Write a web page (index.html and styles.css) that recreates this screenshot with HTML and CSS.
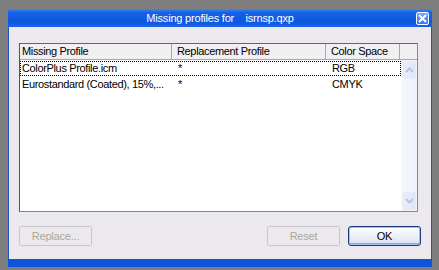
FILE: index.html
```html
<!DOCTYPE html>
<html lang="en">
<head>
    <meta charset="UTF-8">
    <title>Missing profiles</title>
    <link rel="stylesheet" href="styles.css">
</head>
<body>
    <div class="window">
        <div class="titlebar">
            <span class="title">Missing profiles for    isrnsp.qxp</span>
            <button class="close" aria-label="Close">
                <svg width="9" height="9" viewBox="0 0 9 9">
                    <path d="M1 1 L8 8 M8 1 L1 8" stroke="#fff" stroke-width="2"/>
                </svg>
            </button>
        </div>
        <div class="content">
            <div class="list">
                <div class="list-header">
                    <div class="col">Missing Profile</div>
                    <div class="col">Replacement Profile</div>
                    <div class="col">Color Space</div>
                    <div class="col"></div>
                </div>
                <div class="list-body">
                    <div class="rows">
                        <div class="row focused">
                            <div class="cell">ColorPlus Profile.icm</div>
                            <div class="cell">*</div>
                            <div class="cell">RGB</div>
                        </div>
                        <div class="row">
                            <div class="cell">Eurostandard (Coated), 15%,...</div>
                            <div class="cell">*</div>
                            <div class="cell">CMYK</div>
                        </div>
                    </div>
                    <div class="scrollbar">
                        <div class="scroll-btn">
                            <svg width="9" height="6" viewBox="0 0 9 6"><path d="M1 5 L4.5 1.5 L8 5" fill="none" stroke="#b8c6e2" stroke-width="2"/></svg>
                        </div>
                        <div class="scroll-track"></div>
                        <div class="scroll-btn">
                            <svg width="9" height="6" viewBox="0 0 9 6"><path d="M1 1 L4.5 4.5 L8 1" fill="none" stroke="#b8c6e2" stroke-width="2"/></svg>
                        </div>
                    </div>
                </div>
            </div>
            <div class="buttons">
                <button class="btn" disabled>Replace...</button>
                <span class="spacer"></span>
                <button class="btn" disabled>Reset</button>
                <button class="btn default">OK</button>
            </div>
        </div>
    </div>
</body>
</html>
```

FILE: styles.css
```css
body {
    margin: 0;
    background-color: #7f7f7f;
    font-family: "Liberation Sans", Arial, sans-serif;
    font-size: 11px;
    letter-spacing: -0.35px;
    color: #000;
}
.window {
    margin: 9px 0 0 8px;
    width: 424px;
    height: 258px;
    display: flex;
    flex-direction: column;
}
.titlebar {
    height: 18px;
    background: linear-gradient(#3d86f0 0%, #1660e6 20%, #0c58e0 70%, #1a63e8 100%);
    display: flex;
    align-items: center;
    justify-content: center;
    position: relative;
    border-radius: 2px 2px 0 0;
}
.title {
    color: #fff;
    white-space: pre;
    letter-spacing: -0.2px;
}
.close {
    position: absolute;
    right: 3px;
    top: 3px;
    width: 13px;
    height: 13px;
    padding: 0;
    border: 1px solid #fff;
    border-radius: 2px;
    background: linear-gradient(#7aa6f6, #3a72e8);
    display: flex;
    align-items: center;
    justify-content: center;
}
.content {
    flex: 1;
    background-color: #ebe9ed;
    border-left: 1px solid #1c55c8;
    border-right: 1px solid #1c55c8;
    border-bottom: 8px solid #0d56dc;
    padding: 16px 13px 0 10px;
    display: flex;
    flex-direction: column;
}
.list {
    width: 397px;
    height: 167px;
    background: #fff;
    border: 1px solid #828790;
    border-left-color: #555;
    border-top-color: #666;
    display: flex;
    flex-direction: column;
}
.list-header {
    display: grid;
    grid-template-columns: 152px 154px 74px 1fr;
    height: 15px;
    background: #f1eff2;
    border-bottom: 1px solid #a8a6a8;
}
.list-header .col {
    border-right: 1px solid #a8a6a8;
    padding-left: 5px;
    line-height: 15px;
    white-space: nowrap;
    overflow: hidden;
}
.list-header .col:first-child {
    padding-left: 2px;
}
.list-header .col:last-child {
    border-right: none;
}
.list-body {
    flex: 1;
    display: flex;
}
.rows {
    width: 381px;
}
.row {
    display: grid;
    grid-template-columns: 152px 154px 75px;
    height: 14px;
    line-height: 14px;
    border: 1px dotted transparent;
    margin-bottom: 0;
}
.row.focused {
    border-color: #000;
    height: 13px;
    line-height: 13px;
    margin-top: 1px;
}
.cell {
    padding-left: 5px;
    white-space: nowrap;
    overflow: hidden;
}
.cell:first-child {
    padding-left: 1px;
}
.scrollbar {
    width: 16px;
    display: flex;
    flex-direction: column;
    background: #f4f3f7;
}
.scroll-btn {
    height: 16px;
    margin: 1px 1px 0 2px;
    background: linear-gradient(90deg, #e9eef9, #dfe6f6);
    border: 1px solid #e4eaf7;
    border-radius: 2px;
    display: flex;
    align-items: center;
    justify-content: center;
}
.scroll-btn:last-child {
    margin: 0 1px 1px 2px;
}
.scroll-track {
    flex: 1;
    background: linear-gradient(90deg, #f7f8fc, #eef1f9);
}
.buttons {
    display: flex;
    margin-top: 14px;
    gap: 8px;
}
.spacer {
    flex: 1;
}
.btn {
    width: 73px;
    height: 20px;
    font-family: "Liberation Sans", Arial, sans-serif;
    font-size: 11px;
    letter-spacing: -0.2px;
    padding: 0;
    background: #ebe9ed;
    border: 1px solid #c9c7cd;
    border-radius: 2px;
    color: #aca899;
}
.btn.default {
    color: #000;
    border: 1px solid #1f3a7a;
    border-radius: 3px;
    background: linear-gradient(#ffffff 0%, #f2f4fb 40%, #d8e0f3 100%);
    box-shadow: inset 0 0 0 1px #a6c0ee, inset 0 -1px 0 1px #8aa8e4;
    margin-right: -3px;
}
```
